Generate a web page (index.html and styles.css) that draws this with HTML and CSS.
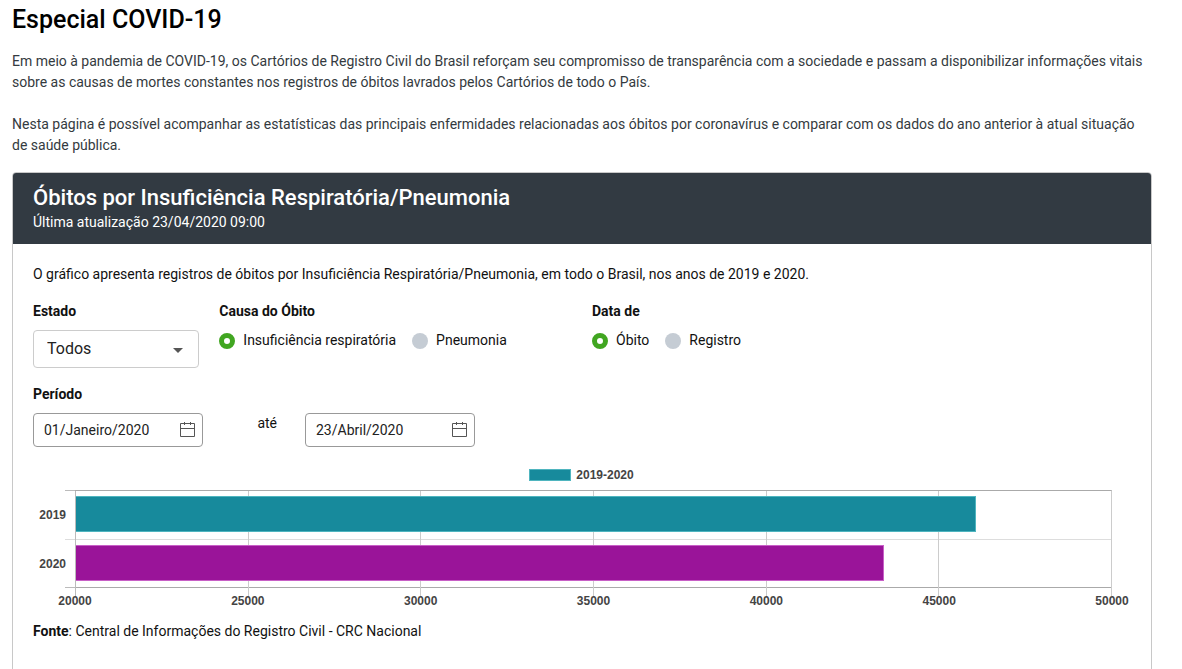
FILE: index.html
```
<!DOCTYPE html>
<html lang="pt-BR">
<head>
    <meta charset="UTF-8">
    <meta name="viewport" content="width=device-width, initial-scale=1.0">
    <title>Especial COVID-19</title>
    <link rel="stylesheet" href="styles.css">
</head>
<body>
    <main class="container">
        <h1>Especial COVID-19</h1>
        <p class="intro">Em meio à pandemia de COVID-19, os Cartórios de Registro Civil do Brasil reforçam seu compromisso de transparência com a sociedade e passam a disponibilizar informações vitais sobre as causas de mortes constantes nos registros de óbitos lavrados pelos Cartórios de todo o País.</p>
        <p class="intro">Nesta página é possível acompanhar as estatísticas das principais enfermidades relacionadas aos óbitos por coronavírus e comparar com os dados do ano anterior à atual situação de saúde pública.</p>

        <section class="card">
            <header class="card-header">
                <h2>Óbitos por Insuficiência Respiratória/Pneumonia</h2>
                <p>Última atualização 23/04/2020 09:00</p>
            </header>
            <div class="card-body">
                <p>O gráfico apresenta registros de óbitos por Insuficiência Respiratória/Pneumonia, em todo o Brasil, nos anos de 2019 e 2020.</p>

                <form>
                    <div class="filters">
                        <div class="field state">
                            <label class="title" for="estado">Estado</label>
                            <div class="select">
                                <select id="estado">
                                    <option>Todos</option>
                                </select>
                                <svg width="10" height="5" viewBox="0 0 10 5"><path d="M0 0h10L5 5z" fill="#555"/></svg>
                            </div>
                        </div>
                        <fieldset class="field cause">
                            <legend class="title">Causa do Óbito</legend>
                            <div class="radios">
                                <label><input type="radio" name="causa" checked>Insuficiência respiratória</label>
                                <label><input type="radio" name="causa">Pneumonia</label>
                            </div>
                        </fieldset>
                        <fieldset class="field date-type">
                            <legend class="title">Data de</legend>
                            <div class="radios">
                                <label><input type="radio" name="data" checked>Óbito</label>
                                <label><input type="radio" name="data">Registro</label>
                            </div>
                        </fieldset>
                    </div>

                    <label class="title" for="inicio">Período</label>
                    <div class="period">
                        <div class="date">
                            <input type="text" id="inicio" value="01/Janeiro/2020">
                            <svg width="16" height="16" viewBox="0 0 16 16" fill="none" stroke="#555"><path d="M.5 1.5h14v13H.5zM.5 6.5h14M4.5 0v3M10.5 0v3"/></svg>
                        </div>
                        <label class="until" for="fim">até</label>
                        <div class="date">
                            <input type="text" id="fim" value="23/Abril/2020">
                            <svg width="16" height="16" viewBox="0 0 16 16" fill="none" stroke="#555"><path d="M.5 1.5h14v13H.5zM.5 6.5h14M4.5 0v3M10.5 0v3"/></svg>
                        </div>
                    </div>
                </form>

                <div class="chart">
                    <div class="legend"><span class="swatch"></span>2019-2020</div>
                    <div class="names">
                        <span>2019</span>
                        <span>2020</span>
                    </div>
                    <div class="plot">
                        <div class="grid-lines">
                            <i></i><i></i><i></i><i></i><i></i><i></i>
                        </div>
                        <div class="row"><div class="bar teal" style="width: 87%"></div></div>
                        <div class="row"><div class="bar purple" style="width: 78.1%"></div></div>
                    </div>
                    <div class="ticks">
                        <span>20000</span>
                        <span>25000</span>
                        <span>30000</span>
                        <span>35000</span>
                        <span>40000</span>
                        <span>45000</span>
                        <span>50000</span>
                    </div>
                </div>

                <p><strong>Fonte</strong>: Central de Informações do Registro Civil - CRC Nacional</p>
            </div>
        </section>
    </main>
</body>
</html>
```
FILE: styles.css
```
* {
    box-sizing: border-box;
}
body {
    font-family: Roboto, sans-serif;
    font-size: 14px;
    line-height: 21px;
    color: #111;
    background: #fff;
    margin: 0;
    overflow-x: hidden;
}
h1, h2, p {
    margin: 0;
}
.container {
    padding: 2px 30px 0 12px;
}
h1 {
    font-size: 25px;
    font-weight: 500;
    line-height: 36px;
    color: #000;
    margin-bottom: 13px;
}
.intro {
    color: #343a40;
    margin-bottom: 21px;
}
.card {
    border: 1px solid #c8c8c8;
    border-radius: 4px;
    margin-top: -5px;
}
.card-header {
    background: #323a42;
    color: #fff;
    padding: 11px 20px;
    border-radius: 3px 3px 0 0;
}
h2 {
    font-size: 22px;
    font-weight: 500;
    line-height: 28px;
}
.card-body {
    padding: 20px 20px 60px;
}
.filters {
    display: grid;
    grid-template-columns: repeat(12, 1fr);
    column-gap: 20px;
    margin: 16px 0;
}
.field {
    border: 0;
    margin: 0;
    padding: 0;
    min-width: 0;
}
.state {
    grid-column: span 2;
}
.cause {
    grid-column: span 4;
}
.date-type {
    grid-column: span 6;
}
.title {
    display: block;
    padding: 0;
    font-weight: 700;
    margin-bottom: 8px;
}
.select,
.date {
    position: relative;
}
.select select {
    appearance: none;
    display: block;
    width: 100%;
    height: 38px;
    padding: 0 13px 2px;
    border: 1px solid #ccc;
    border-radius: 4px;
    background: #fff;
    color: #222;
    font: 16px Roboto, sans-serif;
}
.select svg {
    position: absolute;
    right: 16px;
    top: 18px;
    pointer-events: none;
}
.radios {
    display: flex;
    gap: 16px;
}
.radios label {
    display: flex;
    align-items: center;
    gap: 8px;
}
.radios input {
    appearance: none;
    width: 16px;
    height: 16px;
    margin: 0;
    border-radius: 50%;
    background: #c5ccd4;
}
.radios input:checked {
    background: #fff;
    border: 5px solid #41a621;
}
.period {
    display: flex;
}
.date {
    width: 170px;
}
.date input {
    display: block;
    width: 100%;
    height: 34px;
    padding: 0 36px 0 10px;
    border: 1px solid #999;
    border-radius: 4px;
    color: #222;
    font: 14px Roboto, sans-serif;
}
.date svg {
    position: absolute;
    right: 7px;
    top: 9px;
}
.until {
    width: 102px;
    padding-right: 28px;
    text-align: right;
}
.chart {
    display: grid;
    grid-template-columns: 42px 1fr;
    padding-right: 19px;
    margin: 20px 0 12px;
    color: #444;
    font: bold 12px/16px "Liberation Sans", Arial, sans-serif;
}
.legend {
    grid-column: 1 / -1;
    display: flex;
    justify-content: center;
    align-items: center;
    gap: 5px;
    padding-left: 18px;
    margin-bottom: 7px;
}
.swatch {
    width: 42px;
    height: 12px;
    background: #178a9c;
    border: 1px solid #4fb5bf;
}
.names {
    display: grid;
    grid-template-rows: 1fr 1fr;
    align-items: center;
    text-align: right;
    padding-right: 9px;
}
.plot {
    position: relative;
    display: grid;
    grid-template-rows: 1fr 1fr;
    border: 1px solid #aaa;
    border-right-color: #ccc;
    height: 98px;
}
.plot::before,
.plot::after,
.row:last-child::before {
    content: "";
    position: absolute;
    left: -11px;
    width: 10px;
    height: 1px;
    background: #bbb;
}
.plot::before {
    top: -1px;
}
.plot::after {
    bottom: -1px;
}
.row {
    padding-top: 5px;
}
.row:last-child {
    border-top: 1px solid #ddd;
}
.row:last-child::before {
    top: 48px;
    background: #ddd;
}
.bar {
    position: relative;
    height: 36px;
}
.teal {
    background: #178a9c;
    border: solid #4fb5bf;
    border-width: 1px 1px 1px 0;
}
.purple {
    background: #9a1499;
    border: solid #c860c7;
    border-width: 1px 1px 1px 0;
}
.grid-lines {
    position: absolute;
    inset: 0 -1px -9px -1px;
    display: grid;
    grid-template-columns: repeat(6, 1fr);
    border-left: 1px solid #bbb;
}
.grid-lines i {
    border-right: 1px solid #ccc;
}
.ticks {
    grid-column: 2;
    display: flex;
    justify-content: space-between;
    margin: 5px -20px 0;
}
.ticks span {
    width: 40px;
    text-align: center;
}
```
